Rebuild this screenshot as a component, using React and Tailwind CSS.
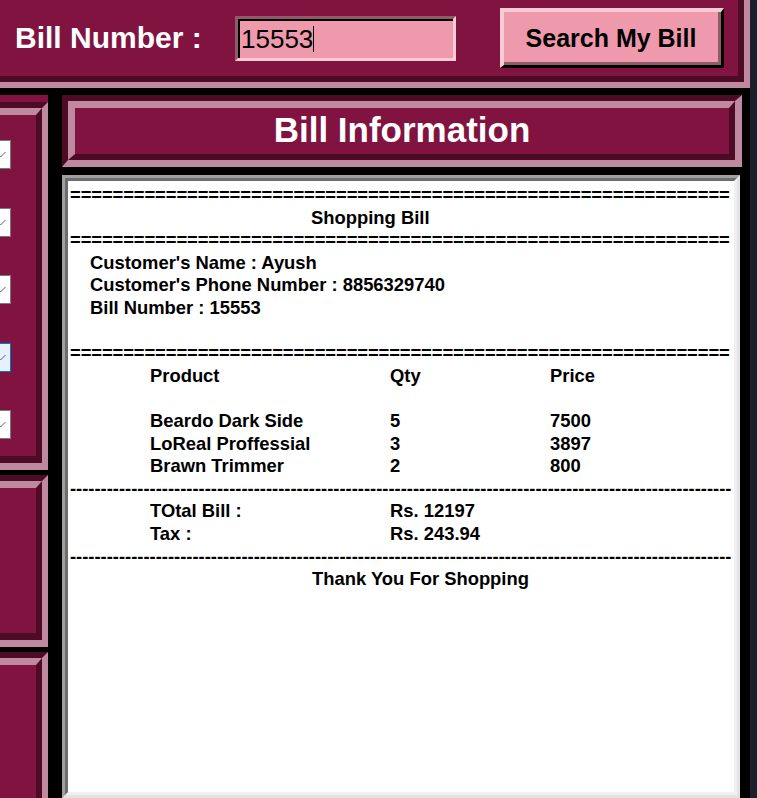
import React from "react";

const eq = "=".repeat(62);
const dash = "-".repeat(108);

function Line({ children, className = "" }) {
  return (
    <div className={"h-[22.6px] leading-[22.6px] whitespace-nowrap overflow-hidden " + className}>
      {children}
    </div>
  );
}

function Row({ a, b, c }) {
  return (
    <Line className="flex pl-[80px]">
      <span className="w-[240px] shrink-0">{a}</span>
      <span className="w-[160px] shrink-0">{b}</span>
      <span>{c}</span>
    </Line>
  );
}

// groove frame whose left edge is off screen
function SideFrame({ className = "", children }) {
  return (
    <div
      className={
        "border-t-[6px] border-r-[6px] border-b-[7px] border-t-[#4d0b26] border-r-[#bf899f] border-b-[#bf899f] " +
        className
      }
    >
      <div className="h-full border-t-[7px] border-r-[6px] border-b-[7px] border-t-[#bf899f] border-r-[#4d0b26] border-b-[#4d0b26] bg-[#80133f]">
        {children}
      </div>
    </div>
  );
}

function Combo({ active }) {
  return (
    <div
      className={
        "relative w-[11px] h-[29px] shrink-0 border border-l-0 " +
        (active ? "border-[#0078d7] bg-[#e5f1fb]" : "border-[#7a7a7a] bg-white")
      }
    >
      <svg className="absolute left-0 top-0" width="10" height="27" viewBox="0 0 10 27">
        <polyline points="-4.5,11 0.5,16 5.5,11" fill="none" stroke="#606060" strokeWidth="1" />
      </svg>
    </div>
  );
}

export default function App() {
  return (
    <div className="w-[757px] h-[798px] bg-black flex overflow-hidden font-['Liberation_Sans',Arial,sans-serif]">
      <div className="w-[750px] shrink-0 flex flex-col">
        {/* search bar */}
        <div className="h-[88px] shrink-0 border-b-[6px] border-r-[6px] border-[#bf899f]">
          <div className="h-full border-b-[6px] border-r-[6px] border-[#4d0b26] bg-[#80133f] flex items-center pl-[15px]">
            <div className="w-[220px] shrink-0 text-white font-bold text-[30px] leading-none">
              Bill Number :
            </div>
            <div className="w-[221px] h-[45px] shrink-0 border-[3px] border-t-[#8f5b67] border-l-[#8f5b67] border-b-[#f7cbd5] border-r-[#f7cbd5]">
              <div className="h-full border-t-[2px] border-l-[2px] border-black bg-[#ef99ad] flex items-center pl-[1px]">
                <span className="text-black text-[26px] leading-none">15553</span>
                <span className="w-[1px] h-[26px] bg-black"></span>
              </div>
            </div>
            <div className="ml-[44px] w-[224px] h-[60px] shrink-0 border-t-[4px] border-l-[4px] border-b-[3px] border-r-[3px] border-t-[#f7cbd5] border-l-[#f7cbd5] border-b-black border-r-black">
              <div className="h-full border-b-[3px] border-r-[3px] border-[#8f5b67] bg-[#ef99ad] flex items-center justify-center pt-[2px]">
                <span className="text-black font-bold text-[25px] leading-none">Search My Bill</span>
              </div>
            </div>
          </div>
        </div>

        <div className="h-[7px] shrink-0"></div>

        <div className="flex-1 flex overflow-hidden">
          {/* left column */}
          <div className="w-[48px] shrink-0 flex flex-col gap-[5px]">
            <div className="h-[375px] shrink-0 bg-[#80133f] pt-[7px]">
              <SideFrame className="h-full">
                <div className="flex flex-col gap-[38.5px] pt-[25px]">
                  <Combo />
                  <Combo />
                  <Combo />
                  <Combo active />
                  <Combo />
                </div>
              </SideFrame>
            </div>
            <SideFrame className="h-[172px] shrink-0" />
            <SideFrame className="h-[200px] shrink-0" />
          </div>

          <div className="w-[14px] shrink-0"></div>

          {/* right column */}
          <div className="w-[680px] shrink-0 flex flex-col">
            <div className="h-[72px] shrink-0 border-t-[6px] border-l-[6px] border-b-[7px] border-r-[7px] border-t-[#4d0b26] border-l-[#4d0b26] border-b-[#bf899f] border-r-[#bf899f]">
              <div className="h-full border-t-[7px] border-l-[7px] border-b-[6px] border-r-[6px] border-t-[#bf899f] border-l-[#bf899f] border-b-[#4d0b26] border-r-[#4d0b26] bg-[#80133f] flex items-center justify-center pb-[3px]">
                <span className="text-white font-bold text-[35px] leading-none">Bill Information</span>
              </div>
            </div>

            <div className="h-[8px] shrink-0"></div>

            <div className="flex-1 w-[678px] border-[3px] border-t-[#a0a0a0] border-l-[#a0a0a0] border-b-[#e3e3e3] border-r-[#e3e3e3]">
              <div className="h-full border-[3px] border-t-[#6d6d6d] border-l-[#6d6d6d] border-b-[#f0f0f0] border-r-[#f0f0f0] bg-white pt-[3px] pl-[2px] text-black font-bold text-[18.4px] overflow-hidden">
                <Line className="tracking-[-0.1px]">{eq}</Line>
                <Line className="pl-[241px]">Shopping Bill</Line>
                <Line className="tracking-[-0.1px]">{eq}</Line>
                <Line className="pl-[20px]">Customer's Name : Ayush</Line>
                <Line className="pl-[20px]">Customer's Phone Number : 8856329740</Line>
                <Line className="pl-[20px]">Bill Number : 15553</Line>
                <Line></Line>
                <Line className="tracking-[-0.1px]">{eq}</Line>
                <Row a="Product" b="Qty" c="Price" />
                <Line></Line>
                <Row a="Beardo Dark Side" b="5" c="7500" />
                <Row a="LoReal Proffessial" b="3" c="3897" />
                <Row a="Brawn Trimmer" b="2" c="800" />
                <Line>{dash}</Line>
                <Row a="TOtal Bill :" b="Rs. 12197" c="" />
                <Row a="Tax :" b="Rs. 243.94" c="" />
                <Line>{dash}</Line>
                <Line className="pl-[242px]">Thank You For Shopping</Line>
              </div>
            </div>
          </div>
        </div>
      </div>
      <div className="flex-1 bg-[#1d1f2c]"></div>
    </div>
  );
}
